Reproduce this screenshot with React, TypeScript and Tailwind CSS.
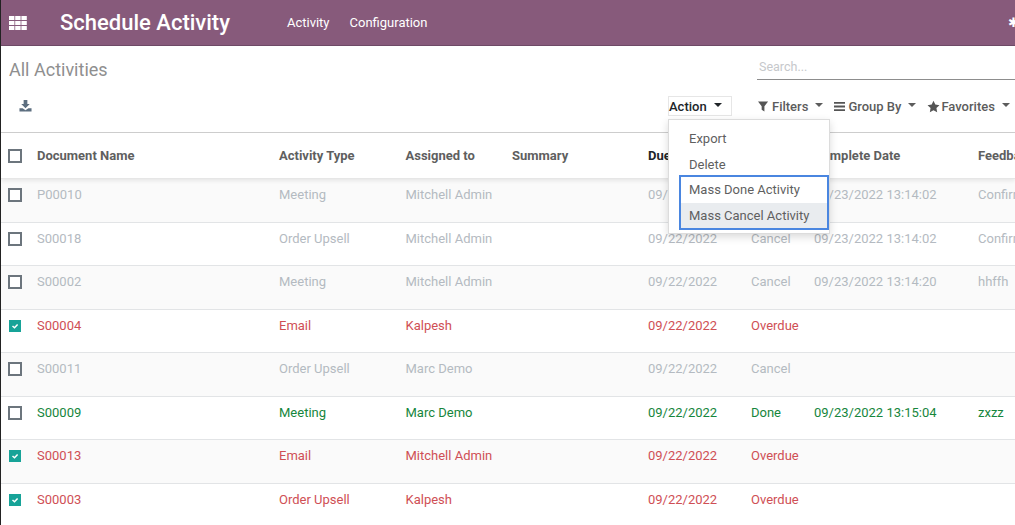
import React from 'react';

const columns = [
  { label: 'Document Name', width: 'w-[242px]' },
  { label: 'Activity Type', width: 'w-[126.500px]' },
  { label: 'Assigned to', width: 'w-[106.500px]' },
  { label: 'Summary', width: 'w-[136px]' },
  { label: 'Due Date', width: 'w-[103px]' },
  { label: 'State', width: 'w-[63px]' },
  { label: 'Complete Date', width: 'w-[164px]' },
  { label: 'Feedback', width: 'w-[80px]' },
];

const rows = [
  { doc: 'P00010', type: 'Meeting', user: 'Mitchell Admin', due: '09/22/2022', state: 'Cancel', done: '09/23/2022 13:14:02', note: 'Confirm', tone: 'muted', checked: false },
  { doc: 'S00018', type: 'Order Upsell', user: 'Mitchell Admin', due: '09/22/2022', state: 'Cancel', done: '09/23/2022 13:14:02', note: 'Confirm', tone: 'muted', checked: false },
  { doc: 'S00002', type: 'Meeting', user: 'Mitchell Admin', due: '09/22/2022', state: 'Cancel', done: '09/23/2022 13:14:20', note: 'hhffh', tone: 'muted', checked: false },
  { doc: 'S00004', type: 'Email', user: 'Kalpesh', due: '09/22/2022', state: 'Overdue', done: '', note: '', tone: 'late', checked: true },
  { doc: 'S00011', type: 'Order Upsell', user: 'Marc Demo', due: '09/22/2022', state: 'Cancel', done: '', note: '', tone: 'muted', checked: false },
  { doc: 'S00009', type: 'Meeting', user: 'Marc Demo', due: '09/22/2022', state: 'Done', done: '09/23/2022 13:15:04', note: 'zxzz', tone: 'done', checked: false },
  { doc: 'S00013', type: 'Email', user: 'Mitchell Admin', due: '09/22/2022', state: 'Overdue', done: '', note: '', tone: 'late', checked: true },
  { doc: 'S00003', type: 'Order Upsell', user: 'Kalpesh', due: '09/22/2022', state: 'Overdue', done: '', note: '', tone: 'late', checked: true },
];

const toneClass: Record<string, string> = {
  muted: 'text-[#b4bac1]',
  late: 'text-[#cf4f55]',
  done: 'text-[#16863c]',
};

const Caret = () => (
  <span className="ml-[7px] mb-[4px] inline-block border-x-[4px] border-t-[4px] border-x-transparent border-t-current" />
);

const Checkbox = ({ checked }: { checked: boolean }) => (
  <span className="flex h-[14px] w-[14px] items-center justify-center">
    {checked ? (
      <span className="flex h-3 w-3 items-center justify-center bg-[#17a398]">
        <svg viewBox="0 0 12 12" className="h-3 w-3">
          <path d="M3.5 6l2 1.8L8.600 4.400" fill="none" stroke="#fff" strokeWidth="1.500" />
        </svg>
      </span>
    ) : (
      <span className="block h-[14px] w-[14px] border-2 border-[#6c757d] bg-white" />
    )}
  </span>
);

const App: React.FC = () => {
  return (
    <div className="relative h-[525px] w-[1015px] overflow-hidden border-l border-[#222] bg-white font-['Roboto',sans-serif] text-[13px] text-[#4c4c4c]">
      {/* Navbar */}
      <div className="flex h-[46px] items-center border-b border-[#6e4a66] bg-[#875a7b] text-white">
        <svg viewBox="0 0 18 14" className="ml-[8px] h-[14px] w-[18px]" fill="#fff">
          {[0, 5, 10].map((y) =>
            [0, 6.2, 12.4].map((x) => <rect key={`${x}-${y}`} x={x} y={y} width="5.400" height="4" />),
          )}
        </svg>
        <span className="ml-[33px] text-[22px] font-medium">Schedule Activity</span>
        <span className="ml-[57px]">Activity</span>
        <span className="ml-[20px]">Configuration</span>
        <span className="ml-auto -mr-[4px] text-[13px] leading-none">✱</span>
      </div>

      {/* Control panel */}
      <div className="flex h-[46px] items-start justify-between pl-[8px]">
        <span className="mt-[10px] text-[18px] text-[#8f8f8f]">All Activities</span>
        <div className="mt-[10px] h-[24px] w-[258px] border-b border-[#8d8d8d] text-[12.5px] leading-[22px] text-[#c6c8cb]">
          <span className="ml-[2px]">Search...</span>
        </div>
      </div>
      <div className="flex h-[40px] items-start">
        <svg viewBox="0 0 14 14" className="ml-[18px] mt-[7px] h-[13px] w-[13px]" fill="#5d6f80">
          <path d="M5 1h4v4.500h2.600L7 10 2.400 5.500H5zM.5 10h3.400L7 12.200 10.100 10h3.400v3.500H.5z" />
        </svg>
        <div className="ml-[636px] mt-[4px] flex h-[20px] w-[64px] items-center border border-[#e6e6e6] pt-px font-medium text-[#212529]">
          Action
          <Caret />
        </div>
        <div className="ml-[26px] mt-[5px] flex items-center font-medium text-[#5c5c5c]">
          <svg viewBox="0 0 12 12" className="mr-[3px] h-[11px] w-[11px]" fill="#555">
            <path d="M0 .5h11L7 5.600V11.500L4 9.500V5.600z" />
          </svg>
          Filters
          <Caret />
        </div>
        <div className="ml-[11px] mt-[5px] flex items-center font-medium text-[#5c5c5c]">
          <svg viewBox="0 0 12 12" className="mr-[3px] h-[11px] w-[11px]" fill="#555">
            <path d="M0 1h12v2H0zM0 5h12v2H0zM0 9h12v2H0z" />
          </svg>
          Group By
          <Caret />
        </div>
        <div className="ml-[11px] mt-[5px] flex items-center font-medium text-[#5c5c5c]">
          <svg viewBox="0 0 24 24" className="mr-[1px] h-[13px] w-[13px]" fill="#555">
            <path d="M12 1.500l3.300 7 7.700 1-5.600 5.300 1.400 7.700-6.800-3.700-6.800 3.700 1.400-7.700L1 9.500l7.700-1z" />
          </svg>
          Favorites
          <Caret />
        </div>
      </div>

      {/* Table */}
      <div className="border-t border-[#cfcfcf]">
        <div className="relative flex h-[46px] items-center border-b border-[#e6e6e6] font-bold text-[#5f5f5f] shadow-[0_2px_4px_rgba(0,0,0,0.08)]">
          <span className="ml-[7px] mr-[15px]">
            <Checkbox checked={false} />
          </span>
          {columns.map((c) => (
            <span key={c.label} className={`${c.width} shrink-0 whitespace-nowrap ${c.label === 'Due Date' ? 'text-[#212529]' : ''}`}>
              {c.label}
            </span>
          ))}
        </div>
        {rows.map((r, i) => (
          <div
            key={r.doc}
            className={`flex h-[43.500px] items-start border-b border-[#e2e4e6] pt-[6px] ${toneClass[r.tone]} ${i % 2 === 0 ? 'bg-[#fafafa]' : 'bg-white'}`}
          >
            <span className="mt-[3px] flex w-[36px] shrink-0 pl-[7px]">
              <Checkbox checked={r.checked} />
            </span>
            {[r.doc, r.type, r.user, '', r.due, r.state, r.done, r.note].map((v, j) => (
              <span key={j} className={`${columns[j].width} shrink-0 whitespace-nowrap`}>
                {v}
              </span>
            ))}
          </div>
        ))}
      </div>

      {/* Action dropdown */}
      <div className="absolute left-[667px] top-[119px] w-[162px] border border-[#dcdcdc] bg-white pt-[6px] pb-[3px] text-[#5f5f5f] shadow-[0_3px_8px_rgba(0,0,0,0.15)]">
        <div className="h-[26px] pl-[20px] leading-[26px]">Export</div>
        <div className="h-[23px] pl-[20px] leading-[26px]">Delete</div>
        <div className="ml-[10px] border-2 border-[#4a86e0]">
          <div className="h-[26px] pl-[8px] leading-[25px]">Mass Done Activity</div>
          <div className="h-[25px] bg-[#e9ecef] pl-[8px] leading-[25px]">Mass Cancel Activity</div>
        </div>
      </div>
    </div>
  );
};

export default App;
